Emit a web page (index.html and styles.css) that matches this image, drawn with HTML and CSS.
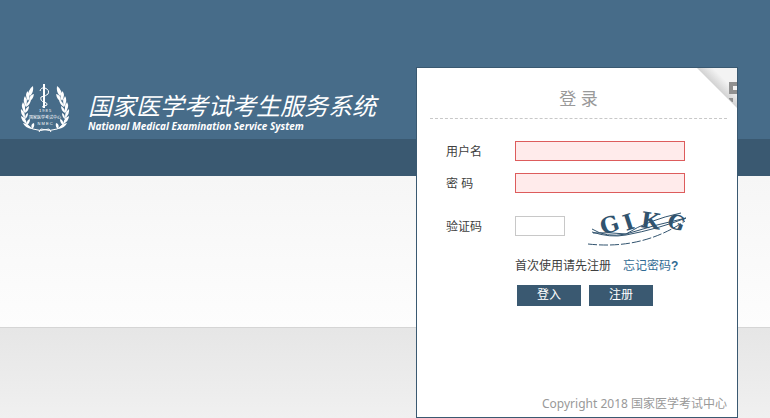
FILE: index.html
```html
<!DOCTYPE html>
<html lang="zh-CN">
  <head>
    <meta charset="UTF-8" />
    <meta name="viewport" content="width=device-width, initial-scale=1.0" />
    <title>国家医学考试考生服务系统</title>
    <link rel="stylesheet" href="styles.css">
  </head>
  <body>
    <div class="page">
      <header class="brand">
        <svg class="emblem" viewBox="0 0 50 52" aria-hidden="true">
          <defs>
            <g id="branch">
              <path class="stem" d="M12 7C3 19 -1 41 13 46Q20 49 29 46L31 49" />
              <path class="leaf" d="M13 3Q7 7 10 13Q14 9 13 3ZM8 8Q4 11 8 18Q11 13 8 8ZM5 13Q2 17 6 24Q8 18 5 13ZM3 19Q0 24 5 30Q6 24 3 19ZM1 26Q0 31 5 35Q5 29 1 26ZM1 33Q1 38 7 41Q6 35 1 33ZM3 40Q5 45 12 46Q9 41 3 40ZM14 11Q9 12 9 18Q13 17 14 11ZM11 17Q7 18 6 24Q10 22 11 17ZM9 23Q5 25 5 30Q9 28 9 23ZM8 30Q5 31 5 36Q8 34 8 30ZM10 36Q6 37 7 42Q10 40 10 36ZM14 40Q10 41 12 46Q15 44 14 40Z" />
            </g>
          </defs>
          <use href="#branch" />
          <use href="#branch" transform="matrix(-1 0 0 1 50 0)" />
          <path class="staff" d="M24 1V25" />
          <path class="snake" d="M20 8Q21 4 25 5Q30 7 28 11Q26 13 21 14Q20 18 24 19Q28 20 27 22L22 24" />
          <text class="emblem-year" x="25" y="29">1 9 8 5</text>
          <text class="emblem-name" x="25" y="36">国家医学考试中心</text>
          <text class="emblem-year" x="25" y="42">N M E C</text>
        </svg>
        <div class="brand-text">
          <h1>国家医学考试考生服务系统</h1>
          <p>National Medical Examination Service System</p>
        </div>
      </header>

      <main class="login">
        <svg class="corner" viewBox="0 0 40 40" aria-hidden="true">
          <defs>
            <linearGradient id="fold" gradientUnits="userSpaceOnUse" x1="20" y1="20" x2="28" y2="12">
              <stop offset="0" stop-color="#d2d2d2" />
              <stop offset="1" stop-color="#f3f3f3" />
            </linearGradient>
          </defs>
          <path fill="url(#fold)" d="M0 0H40V40Z" />
          <path fill="#909090" d="M32 14H40V18H36V22H40V26H32ZM32 30H36V34H35L32 31Z" />
        </svg>
        <h2>登 录</h2>
        <form class="login-form">
          <label for="username">用户名</label>
          <input class="field field-error" type="text" id="username" />
          <label for="password">密 码</label>
          <input class="field field-error" type="password" id="password" />
          <label for="code">验证码</label>
          <div class="code-row">
            <input class="field field-code" type="text" id="code" />
            <svg class="captcha" viewBox="0 0 100 42" role="img" aria-label="验证码图片">
              <text transform="translate(15 30) rotate(-18)">G</text>
              <text transform="translate(38 26) rotate(-18)">I</text>
              <text transform="translate(52 22) rotate(8)">K</text>
              <text class="captcha-last" transform="translate(78 21) rotate(20)">G</text>
              <path d="M4 24Q18 33 38 29Q60 15 93 8M4 27Q22 33 38 30Q70 24 98 13M5 28Q20 27 38 29Q66 20 98 13" />
              <path d="M0 39Q54 45 97 16" stroke-dasharray="9 2" />
            </svg>
          </div>
          <div class="links">
            <span>首次使用请先注册</span>
            <a href="#">忘记密码<b>?</b></a>
          </div>
          <div class="buttons">
            <button type="submit">登入</button>
            <button type="button">注册</button>
          </div>
        </form>
        <footer>Copyright 2018 国家医学考试中心</footer>
      </main>
    </div>
  </body>
</html>
```

FILE: styles.css
```css
* {
  box-sizing: border-box;
}
body {
  margin: 0;
  font-family: "Liberation Sans", "Noto Sans CJK SC", sans-serif;
  font-size: 12px;
  line-height: 16px;
  color: #404040;
}
.page {
  display: flex;
  justify-content: space-between;
  align-items: flex-start;
  min-height: 100vh;
  padding: 67px 32px 0 20px;
  background: linear-gradient(
    #476c89 139px,
    #3a5971 139px 176px,
    #f6f6f6 176px,
    #fdfdfd 327px,
    #d5d5d5 327px 328px,
    #e6e6e6 328px,
    #f0f0f0 418px
  );
}
.brand {
  display: flex;
  gap: 18px;
  padding-top: 16px;
  color: white;
}
.emblem {
  width: 50px;
  height: 52px;
  fill: white;
}
.stem,
.staff,
.snake {
  fill: none;
  stroke: white;
}
.staff {
  stroke-width: 2;
}
.emblem-year,
.emblem-name {
  font-size: 4px;
  text-anchor: middle;
}
.brand-text {
  padding-top: 11px;
  font-style: italic;
}
.brand h1 {
  margin: 0;
  font-size: 24px;
  font-weight: 400;
  line-height: 26px;
  white-space: nowrap;
}
.brand p {
  margin: 0;
  font-family: "Open Sans", sans-serif;
  font-size: 10px;
  font-weight: 700;
  line-height: 12px;
  white-space: nowrap;
}
.login {
  position: relative;
  display: flex;
  flex-direction: column;
  width: 322px;
  min-height: calc(100vh - 67px);
  border: 1px solid #3a5971;
  background-color: white;
}
.corner {
  position: absolute;
  top: 0;
  right: 0;
  width: 40px;
  height: 40px;
}
.login h2 {
  margin: 0 10px 0 13px;
  padding: 22px 0 8px;
  border-bottom: 1px dashed #c8c8c8;
  font-size: 17px;
  font-weight: 400;
  line-height: 20px;
  text-align: center;
  color: #999;
}
.login-form {
  display: grid;
  grid-template-columns: 69px 1fr;
  align-items: center;
  row-gap: 12px;
  padding: 22px 29px 0;
}
.login-form label {
  padding-top: 2px;
}
.field {
  width: 170px;
  height: 20px;
  padding: 0 4px;
  border: 1px solid #c8c8c8;
  background-color: white;
  font: inherit;
}
.field-error {
  border-color: #dd5c5c;
  background-color: #ffebeb;
}
.field-code {
  width: 50px;
}
.code-row {
  display: flex;
  align-items: center;
  gap: 23px;
}
.captcha {
  width: 100px;
  height: 42px;
  overflow: visible;
  fill: #31536e;
}
.captcha text {
  font-family: "DejaVu Serif", serif;
  font-size: 22px;
  font-weight: 700;
}
.captcha .captcha-last {
  font-size: 20px;
}
.captcha path {
  fill: none;
  stroke: #31536e;
}
.links,
.buttons {
  grid-column: 2;
  display: flex;
}
.links {
  gap: 12px;
  line-height: 14px;
  white-space: nowrap;
}
.links a {
  color: #316b94;
  text-decoration: none;
}
.buttons {
  gap: 8px;
  padding-left: 2px;
}
.buttons button {
  width: 64px;
  height: 21px;
  padding: 0 0 2px;
  border: none;
  background-color: #3a5971;
  color: white;
  font: inherit;
  cursor: pointer;
}
.login footer {
  margin-top: auto;
  padding: 0 10px 5px;
  font-family: "Noto Sans", "Noto Sans CJK SC", sans-serif;
  text-align: right;
  color: #999;
}
```
